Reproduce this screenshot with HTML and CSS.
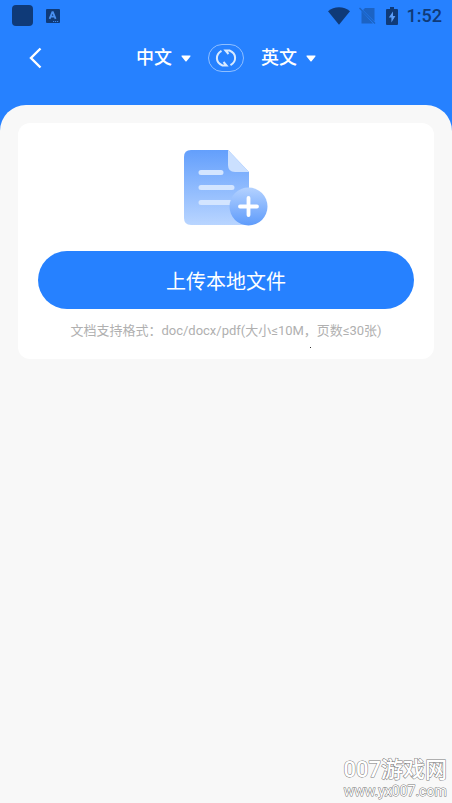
FILE: index.html
```html
<!DOCTYPE html>
<html lang="zh-CN">
<head>
<meta charset="utf-8">
<meta name="viewport" content="width=device-width, initial-scale=1">
<title>文档翻译</title>
<link rel="stylesheet" href="styles.css">
</head>
<body>
<div class="status-bar">
  <div class="status-left">
    <span class="app-dot"></span>
    <svg class="notice" width="14" height="14" viewBox="0 0 14 14" aria-hidden="true">
      <rect width="14" height="14" rx="1" fill="#0f3a78"/>
      <path d="M3.600 9.800 6.300 3.200H6.900L9.600 9.800M4.800 7.600H8.400" fill="none" stroke="#4a90f0" stroke-width="1.800"/>
      <path d="M7 12.500h1.200M9 12.500h1.200M11 12.500h1.200" stroke="#3f86e6"/>
    </svg>
  </div>
  <div class="status-right">
    <svg width="22" height="18" viewBox="0 0 22 18" aria-hidden="true">
      <path d="M0 4.200C6-1.200 16-1.200 22 4.200L11 17.800Z" fill="#0f3a78"/>
    </svg>
    <svg width="18" height="18" viewBox="0 0 18 18" aria-hidden="true">
      <path d="M6 1H15.500V14.500L4 3ZM2.500 4V16.500H14Z" fill="#1c63c4"/>
      <path d="M.5 1 16 16.500" stroke="#1c63c4" stroke-width="1.400"/>
    </svg>
    <svg width="12" height="18" viewBox="0 0 12 18" aria-hidden="true">
      <path d="M4 0h4v2h3q1 0 1 1v14q0 1-1 1H1q-1 0-1-1V3q0-1 1-1h3Z" fill="#0f3a78"/>
      <path d="M7 4.500 2.800 10.500H5.400V15.500L9.400 9H7Z" fill="#5a9cf8"/>
    </svg>
    <time class="clock">1:52</time>
  </div>
</div>

<header class="app-bar">
  <button class="back" type="button" aria-label="返回">
    <svg width="14" height="22" viewBox="0 0 14 22" aria-hidden="true">
      <path d="M12.500 1.500 3 11 12.500 20.500" fill="none" stroke="#fff" stroke-width="2.400"/>
    </svg>
  </button>
  <div class="languages">
    <label class="language">
      <select aria-label="源语言"><option selected>中文</option><option>英文</option></select>
      <svg width="10" height="7" viewBox="0 0 10 7" aria-hidden="true"><path d="M1 .5H9Q10 .5 9.400 1.400L5.600 6.200Q5 7 4.400 6.200L.6 1.400Q0 .5 1 .5Z" fill="#fff"/></svg>
    </label>
    <button class="swap" type="button" aria-label="交换语言">
      <svg width="22" height="20" viewBox="0 0 22 20" aria-hidden="true">
        <g fill="none" stroke="#d9eaff" stroke-width="2">
          <path d="M6.500 2.800C.2 6.500 .2 14.500 7.500 17.500H11.500L8.500 14"/>
          <path d="M15.500 17.200C21.800 13.500 21.800 5.500 14.500 2.500H10.500L13.500 6"/>
        </g>
      </svg>
    </button>
    <label class="language">
      <select aria-label="目标语言"><option>中文</option><option selected>英文</option></select>
      <svg width="10" height="7" viewBox="0 0 10 7" aria-hidden="true"><path d="M1 .5H9Q10 .5 9.400 1.400L5.600 6.200Q5 7 4.400 6.200L.6 1.400Q0 .5 1 .5Z" fill="#fff"/></svg>
    </label>
  </div>
</header>

<main class="panel">
  <section class="card">
    <svg class="doc" width="84" height="76" viewBox="0 0 84 76" aria-hidden="true">
      <defs>
        <linearGradient id="page" x1="0" y1="0" x2="0" y2="1"><stop offset="0" stop-color="#639ffc"/><stop offset="1" stop-color="#b9d5ff"/></linearGradient>
        <linearGradient id="disc" x1="0" y1="0" x2="0" y2="1"><stop offset="0" stop-color="#b4d2ff"/><stop offset="1" stop-color="#5e9bfb"/></linearGradient>
      </defs>
      <path d="M7 0H44L65 22V75H7Q0 75 0 68V7Q0 0 7 0Z" fill="url(#page)"/>
      <path d="M44 0 65 22H51Q44 22 44 15Z" fill="#cbe0ff"/>
      <path d="M17 22.500H37M17 37.500H48M17 52.500H48" stroke="#d3e5ff" stroke-width="5" stroke-linecap="round"/>
      <circle cx="64.500" cy="56.500" r="19" fill="url(#disc)"/>
      <path d="M64.500 48V65M56 56.500H73" stroke="#fff" stroke-width="3.800" stroke-linecap="round"/>
    </svg>
    <button class="upload" type="button">上传本地文件</button>
    <p class="formats">文档支持格式：doc/docx/pdf(大小≤10M，页数≤30张)</p>
    <span class="speck"></span>
  </section>
</main>

<footer class="watermark">
  <span class="site-name">007游戏网</span>
  <span class="site-url">www.yx007.com</span>
</footer>
</body>
</html>
```
FILE: styles.css
```css
* { box-sizing: border-box; }

body {
  margin: 0;
  min-height: 100vh;
  display: flex;
  flex-direction: column;
  background: #2681ff;
  font-family: Roboto, "Noto Sans CJK SC", sans-serif;
}

svg { display: block; flex: none; }

button, select {
  margin: 0;
  padding: 0;
  border: 0;
  background: none;
  color: #fff;
  font-family: inherit;
}

.status-bar {
  display: flex;
  justify-content: space-between;
  align-items: center;
  height: 31px;
  padding: 0 10px 0 12px;
}

.status-left { display: flex; align-items: center; gap: 13px; }

.app-dot {
  width: 21px;
  height: 21px;
  border-radius: 4px;
  background: #0f3a78;
}

.status-right { display: flex; align-items: center; gap: 9px; }

.clock {
  color: #0f3a78;
  font-size: 18px;
  font-weight: 500;
  line-height: 20px;
}

.app-bar {
  display: grid;
  grid-template-columns: 1fr auto 1fr;
  align-items: center;
  height: 54px;
  padding: 0 26px;
}

.back { justify-self: start; padding: 0 2px; }

.languages { display: flex; align-items: center; gap: 17px; }

.language { display: flex; align-items: center; gap: 9px; }

.language select {
  appearance: none;
  font-size: 18px;
  font-weight: 500;
  line-height: 26px;
}

.swap {
  display: grid;
  place-items: center;
  width: 36px;
  height: 28px;
  border: 1px solid #8fbfff;
  border-radius: 14px;
}

.panel {
  flex: 1;
  margin-top: 20px;
  padding: 18px;
  border-radius: 26px 26px 0 0;
  background: #f8f8f8;
}

.card {
  position: relative;
  display: flex;
  flex-direction: column;
  align-items: center;
  padding: 27px 20px 18px;
  border-radius: 12px;
  background: #fff;
}

.upload {
  width: 100%;
  height: 58px;
  margin-top: 25px;
  border-radius: 29px;
  background: #2681ff;
  font-size: 20px;
}

.formats {
  margin: 12px 0 0;
  color: #b0b0b0;
  font-size: 13px;
  line-height: 20px;
}

.speck {
  position: absolute;
  right: 123px;
  bottom: 11px;
  width: 1px;
  height: 1px;
  background: #333;
}

.watermark {
  position: absolute;
  right: 5px;
  bottom: 3px;
  display: flex;
  flex-direction: column;
  align-items: center;
  color: #fff;
  -webkit-text-stroke: 1px #777;
  paint-order: stroke fill;
}

.site-name { font-size: 22px; font-weight: 500; line-height: 24px; }

.site-url { font-size: 14px; line-height: 18px; }
```
